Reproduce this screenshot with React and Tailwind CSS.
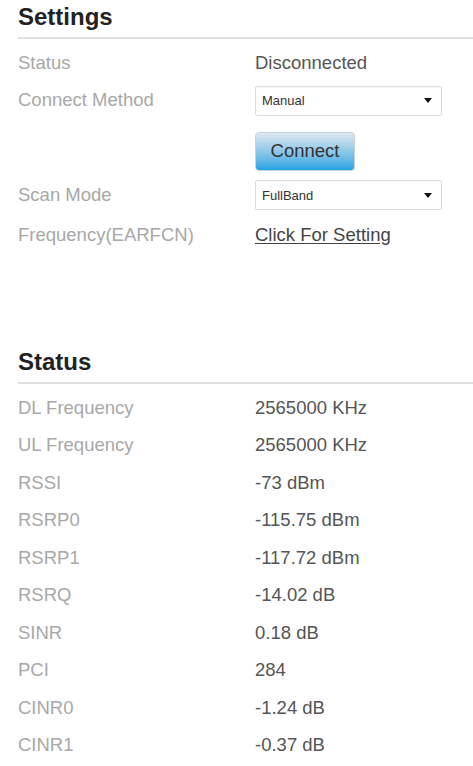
import React from "react";

const statusRows = [
  ["DL Frequency", "2565000 KHz"],
  ["UL Frequency", "2565000 KHz"],
  ["RSSI", "-73 dBm"],
  ["RSRP0", "-115.75 dBm"],
  ["RSRP1", "-117.72 dBm"],
  ["RSRQ", "-14.02 dB"],
  ["SINR", "0.18 dB"],
  ["PCI", "284"],
  ["CINR0", "-1.24 dB"],
  ["CINR1", "-0.37 dB"],
];

const Heading = ({ children }) => (
  <div className="h-[39px] border-b-2 border-[#e0e0e0] flex items-end pb-[8px]">
    <h2 className="text-[24px] leading-none font-bold text-[#222]">{children}</h2>
  </div>
);

const Label = ({ children }) => (
  <div className="w-[237px] text-[#a8a8a8]">{children}</div>
);

const Select = ({ value }) => (
  <div className="w-[187px] h-[30px] border border-[#dcdcdc] rounded-[2px] bg-white flex items-center justify-between pl-[6px] pr-[9px] shadow-[inset_0_1px_1px_rgba(0,0,0,0.04)]">
    <span className="text-[13px] text-[#333]">{value}</span>
    <svg width="8" height="5" viewBox="0 0 8 5">
      <path d="M0 0 L8 0 L4 5 Z" fill="#111" />
    </svg>
  </div>
);

const App = () => {
  return (
    <div
      className="min-h-screen bg-white pl-[18px] text-[18.5px] leading-none"
      style={{ fontFamily: '"Liberation Sans", Arial, sans-serif' }}
    >
      {/* Settings */}
      <Heading>Settings</Heading>
      <div className="mt-[6px] h-[37px] flex items-center">
        <Label>Status</Label>
        <div className="text-[#555]">Disconnected</div>
      </div>
      <div className="h-[37px] flex items-center">
        <Label>Connect Method</Label>
        <Select value="Manual" />
      </div>
      <div className="mt-[13px] flex">
        <div className="w-[237px]" />
        <button className="w-[100px] h-[39px] rounded-[4px] border border-[#c8d4dc] bg-gradient-to-b from-[#dde7ee] via-[#8cc8e8] to-[#1aa3e2] text-[#333] text-[18.5px]">
          Connect
        </button>
      </div>
      <div className="mt-[6px] h-[36px] flex items-center">
        <Label>Scan Mode</Label>
        <Select value="FullBand" />
      </div>
      <div className="h-[44px] flex items-center">
        <Label>Frequency(EARFCN)</Label>
        <a href="#" className="text-[#444] underline underline-offset-2">
          Click For Setting
        </a>
      </div>

      {/* Status */}
      <div className="mt-[88px]">
        <Heading>Status</Heading>
      </div>
      <div className="pt-[5px]">
        {statusRows.map(([label, value]) => (
          <div key={label} className="h-[37.5px] flex items-center">
            <Label>{label}</Label>
            <div className="text-[#555]">{value}</div>
          </div>
        ))}
      </div>
    </div>
  );
};

export default App;
